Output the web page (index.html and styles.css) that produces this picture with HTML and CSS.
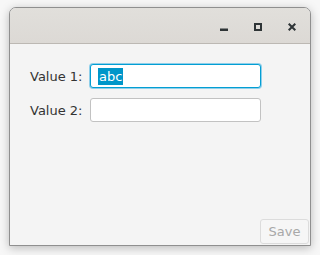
FILE: index.html
```html
<!DOCTYPE html>
<html lang="en">
<head>
  <meta charset="UTF-8" />
  <title>Values</title>
  <link rel="stylesheet" href="styles.css">
</head>
<body>
  <div class="window">
    <div class="titlebar">
      <span class="tb-btn">
        <svg width="8" height="8" viewBox="0 0 8 8"><rect x="0" y="5.5" width="8" height="2.5" fill="#2e3436"/></svg>
      </span>
      <span class="tb-btn">
        <svg width="8" height="8" viewBox="0 0 8 8"><rect x="1" y="1" width="6" height="6" fill="none" stroke="#2e3436" stroke-width="2"/></svg>
      </span>
      <span class="tb-btn">
        <svg width="8" height="8" viewBox="0 0 8 8"><path d="M0.7 0.7 L7.3 7.3 M7.3 0.7 L0.7 7.3" stroke="#2e3436" stroke-width="2"/></svg>
      </span>
    </div>
    <div class="content">
      <div class="form">
        <label class="lbl">Value 1:</label>
        <div class="field focused"><span class="sel">abc</span></div>
        <label class="lbl">Value 2:</label>
        <div class="field"></div>
      </div>
      <div class="actions">
        <button class="btn" disabled>Save</button>
      </div>
    </div>
  </div>
</body>
</html>
```

FILE: styles.css
```css
html, body {
  margin: 0; padding: 0;
  height: 255px;
  overflow: hidden;
  background: #f7f7f7;
  font-family: "DejaVu Sans", sans-serif;
  font-size: 13px;
  color: #333;
}
.window {
  margin: 7px 0 0 9px;
  width: 300px;
  height: 237px;
  border: 1px solid #8f8f8f;
  border-radius: 7px 7px 0 0;
  background: #f4f4f4;
  box-shadow: 0 2px 10px rgba(0,0,0,0.25);
  display: flex;
  flex-direction: column;
  overflow: hidden;
}
.titlebar {
  height: 35px;
  background: linear-gradient(#e1dfdb, #dcd9d5);
  border-bottom: 1px solid #bcb8b3;
  display: flex;
  justify-content: flex-end;
  align-items: center;
  padding-right: 14px;
  gap: 26px;
}
.tb-btn {
  width: 8px; height: 8px;
  display: flex;
  margin-top: 2px;
}
.content {
  flex: 1;
  display: flex;
  flex-direction: column;
  padding: 20px 0 0 20px;
}
.form {
  display: grid;
  grid-template-columns: 60px 171px;
  row-gap: 10px;
  align-items: center;
}
.lbl {
  color: #333;
}
.field {
  height: 22px;
  background: #fff;
  border: 1px solid #c2c2c2;
  border-radius: 3px;
  display: flex;
  align-items: center;
  padding-left: 7px;
}
.field.focused {
  border: 1px solid #039ed3;
  box-shadow: 0 0 0 1px #8fcfea;
}
.sel {
  background: #0096c9;
  color: #fff;
  line-height: 17px;
  padding: 0 1px;
}
.actions {
  margin-top: auto;
  display: flex;
  justify-content: flex-end;
  padding: 0 1px 1px 0;
}
.btn {
  font-family: "DejaVu Sans", sans-serif;
  font-size: 13px;
  color: #a8a8a8;
  background: #f6f6f6;
  border: 1px solid #dcdcdc;
  border-radius: 3px;
  padding: 0 7px;
  height: 25px;
  width: 49px;
}
```
